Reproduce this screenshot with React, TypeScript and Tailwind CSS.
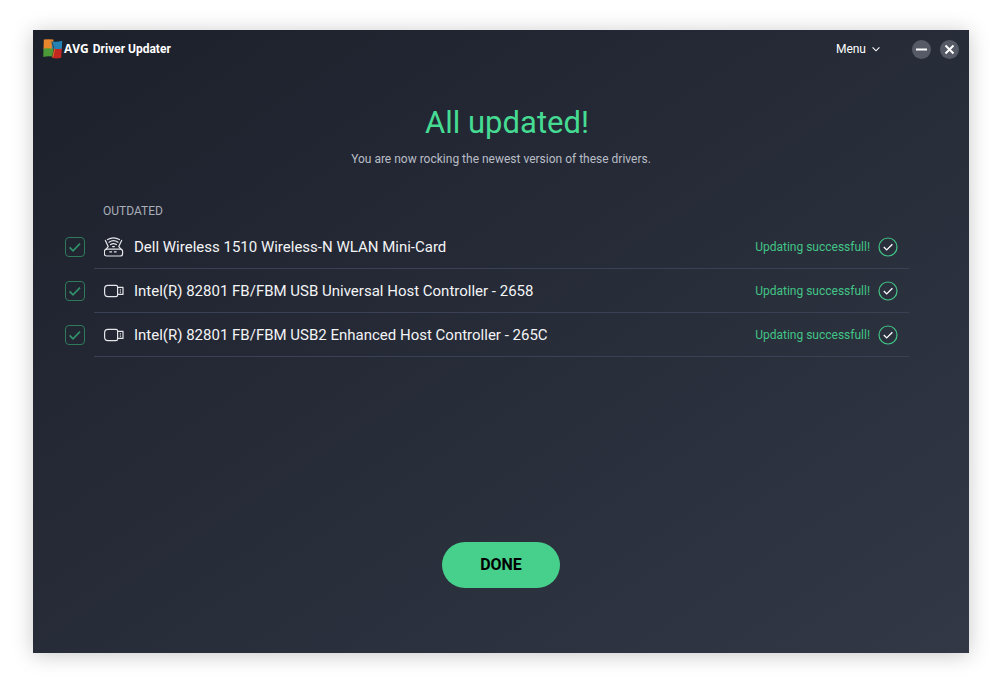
import { ReactNode } from 'react'

interface Driver {
  id: string
  name: string
  kind: 'wireless' | 'usb'
}

const drivers: Driver[] = [
  { id: 'wlan', name: 'Dell Wireless 1510 Wireless-N WLAN Mini-Card', kind: 'wireless' },
  { id: 'usb', name: 'Intel(R) 82801 FB/FBM USB Universal Host Controller - 2658', kind: 'usb' },
  { id: 'usb2', name: 'Intel(R) 82801 FB/FBM USB2 Enhanced Host Controller - 265C', kind: 'usb' }
]

function Logo() {
  return (
    <svg viewBox="0 0 20 20" className="h-5 w-5" aria-hidden="true">
      <path d="M.8.6Q5-.2 10.4.6V10L.5 10.2Z" fill="#e8872b" />
      <path d="M8.6 2.4Q14 3.4 19.2 1.8L18.8 10.4H9Z" fill="#2583b4" />
      <path d="M.5 9.6Q5 8.6 10.4 9.8L9.8 17.6Q5 16.6.3 18Z" fill="#4c9a38" />
      <path d="M11.4 9.4Q15 10.4 18.8 9.4L18.2 18.8Q13 20 9.2 18.8Z" fill="#c2281f" />
      <path d="M8.8 2.6 11 9.6 9.4 18.4" fill="none" stroke="#4a3326" strokeWidth=".8" />
      <path d="m11.6 9.8-1.8 8.8" stroke="#e8872b" strokeWidth=".8" />
    </svg>
  )
}

function WirelessIcon() {
  return (
    <svg viewBox="0 0 20 20" className="h-5 w-5 shrink-0" fill="none" stroke="#e4e6ea" strokeWidth="1.2" strokeLinecap="round" strokeLinejoin="round" aria-hidden="true">
      <path d="M2.8 12.2H16.2Q18.6 12.2 18.6 14.6V16.6Q18.6 19 16.2 19H2.8Q.4 19 .4 16.6V14.6Q.4 12.2 2.8 12.2Z" />
      <path d="M1.4 3.4 4.2 9.6 2 12.2M17.6 3.4 14.8 9.6 17 12.2" />
      <path d="M3.6 2.6Q9.5-1 15.4 2.6M5 5.2Q9.5 2 14 5.2M6.6 7.6Q9.5 5.6 12.4 7.6" />
      <path d="M8.6 9.6H10.4M5.8 14.8H7.6M10.4 14.8H12.2" />
    </svg>
  )
}

function UsbIcon() {
  return (
    <svg viewBox="0 0 20 20" className="h-5 w-5 shrink-0" fill="none" stroke="#e4e6ea" strokeWidth="1.2" strokeLinejoin="round" aria-hidden="true">
      <path d="M4 4.4H12Q13.6 4.4 13.6 6V14Q13.6 15.6 12 15.6H4Q.6 15.6.6 12V8Q.6 4.4 4 4.4Z" />
      <path d="M13.6 6.4H19V13.4H13.6M16.4 8.2V9.4M16.4 10.6V11.8" />
    </svg>
  )
}

function DriverRow({ driver }: { driver: Driver }) {
  return (
    <li className="flex gap-[9px]">
      <div className="relative mt-3 h-5 w-5 shrink-0">
        <input
          id={driver.id}
          type="checkbox"
          defaultChecked
          className="peer block h-5 w-5 appearance-none rounded border border-[#2f7a5b]"
        />
        <svg viewBox="0 0 20 20" className="pointer-events-none absolute inset-0 hidden h-5 w-5 peer-checked:block" fill="none" stroke="#31916a" strokeWidth="1.7" aria-hidden="true">
          <path d="m4.6 10.4 3.4 3.4L15 6.6" />
        </svg>
      </div>
      <div className="flex h-11 flex-1 items-center border-b border-[#3a4152] pr-[11px] pl-2.5">
        {driver.kind === 'wireless' ? <WirelessIcon /> : <UsbIcon />}
        <label htmlFor={driver.id} className="ml-2.5 flex-1 text-[15px] leading-5 text-[#f3f4f6]">
          {driver.name}
        </label>
        <span className="text-[12px] leading-5 text-[#42c586]">Updating successfull!</span>
        <svg viewBox="0 0 20 20" className="ml-2 h-5 w-5 shrink-0" fill="none" aria-hidden="true">
          <circle cx="10" cy="10" r="9" stroke="#42c586" strokeWidth="1.2" />
          <path d="m5.8 10 2.9 2.9L14.4 7.2" stroke="#fff" strokeWidth="1.3" />
        </svg>
      </div>
    </li>
  )
}

function WindowButton({ label, children }: { label: string; children: ReactNode }) {
  return (
    <button type="button" aria-label={label} className="flex h-[19px] w-[19px] items-center justify-center rounded-full bg-[#555a66]">
      <svg viewBox="0 0 19 19" className="h-[19px] w-[19px]" fill="none" stroke="#fff" strokeWidth="2" aria-hidden="true">
        {children}
      </svg>
    </button>
  )
}

export default function App() {
  return (
    <div className="flex min-h-screen bg-white pt-[30px] pr-[31px] pb-8 pl-[33px] font-['Roboto',sans-serif]">
      <div className="flex flex-1 flex-col bg-linear-to-br from-[#1c202b] to-[#323846] shadow-[0_2px_20px_rgba(0,0,0,0.22)]">
        <header className="flex h-[38px] items-center justify-between pr-2.5 pl-2.5 text-white">
          <div className="flex items-center">
            <Logo />
            <span className="ml-px font-['Open_Sans',sans-serif] text-[12px] font-bold">AVG</span>
            <span className="ml-1 text-[12px] font-bold">Driver Updater</span>
          </div>
          <div className="flex items-center">
            <button type="button" className="mr-8 flex items-center gap-1.5 text-[12px]">
              Menu
              <svg viewBox="0 0 8 8" className="h-2 w-2" fill="none" stroke="#fff" strokeWidth="1.1" aria-hidden="true">
                <path d="m.6 2.4 3.4 3.4 3.4-3.4" />
              </svg>
            </button>
            <div className="flex gap-[9px]">
              <WindowButton label="Minimize">
                <path d="M4 9.5H15" />
              </WindowButton>
              <WindowButton label="Close">
                <path d="m5.5 5.5 8 8M13.5 5.5l-8 8" />
              </WindowButton>
            </div>
          </div>
        </header>

        <main className="flex flex-1 flex-col">
          <h1 className="mt-[35px] pl-3 text-center text-[31px] leading-10 text-[#46db93]">All updated!</h1>
          <p className="mt-1.5 text-center text-[12px] leading-5 text-[#b9bdc6]">
            You are now rocking the newest version of these drivers.
          </p>

          <section className="mt-8 pr-[60px] pl-8">
            <h2 className="pl-[38px] text-[12px] leading-5 text-[#a9aeb8]">OUTDATED</h2>
            <ul className="mt-1">
              {drivers.map((driver) => (
                <DriverRow key={driver.id} driver={driver} />
              ))}
            </ul>
          </section>

          <button type="button" className="mx-auto mt-auto mb-[65px] h-[46px] w-[118px] rounded-full bg-[#47d08c] text-[16px] font-bold text-black">
            DONE
          </button>
        </main>
      </div>
    </div>
  )
}
